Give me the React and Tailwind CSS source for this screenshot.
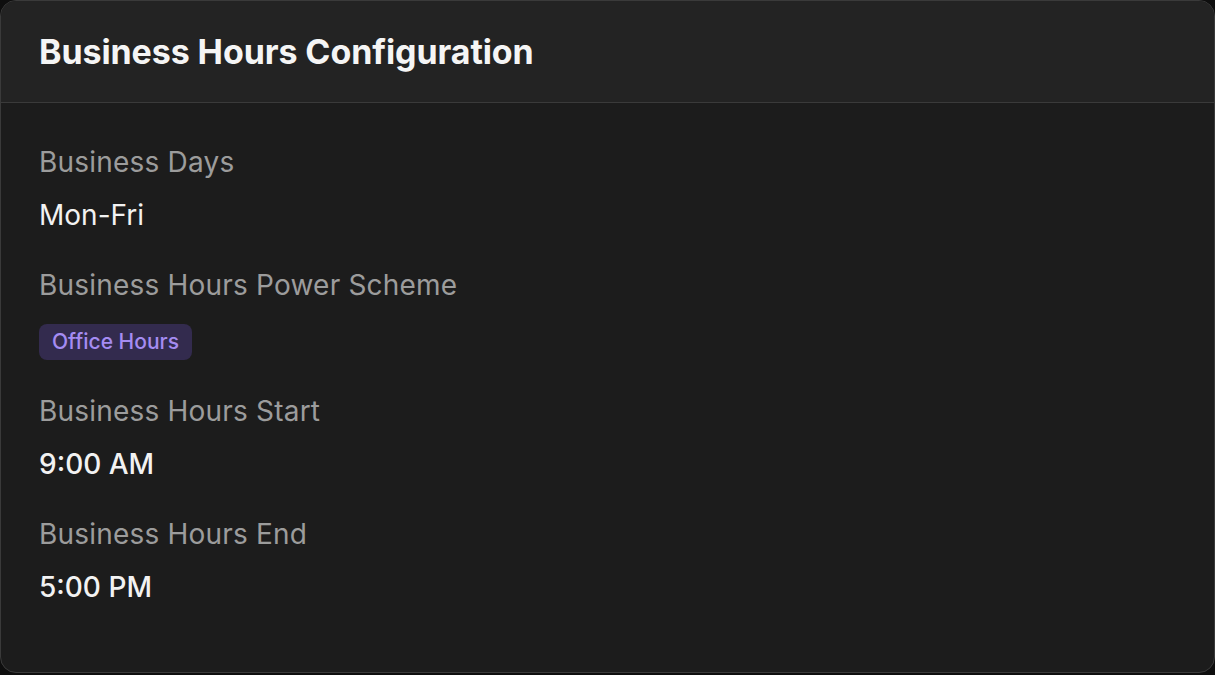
import React from 'react';

const fields = [
  { label: 'Business Days', value: 'Mon-Fri', weight: 'font-normal' },
  { label: 'Business Hours Power Scheme', badge: 'Office Hours' },
  { label: 'Business Hours Start', value: '9:00 AM', weight: 'font-medium' },
  { label: 'Business Hours End', value: '5:00 PM', weight: 'font-medium' },
];

const App = () => {
  return (
    <div className="min-h-screen bg-[#0e0e0e] font-['Inter',sans-serif]">
      <div className="h-[673px] w-full rounded-2xl border border-[#3a3a3a] bg-[#1c1c1c] overflow-hidden flex flex-col">
        <div className="h-[102px] shrink-0 bg-[#232323] border-b border-[#3a3a3a] px-[38px] flex items-center">
          <h2 className="text-[34px] font-bold text-[#f5f5f5] tracking-[-0.1px]">Business Hours Configuration</h2>
        </div>

        <div className="px-[38px] pt-[38px] flex flex-col gap-[28px]">
          {fields.map((f) => (
            <div key={f.label} className={f.badge ? 'flex flex-col gap-[18px] items-start pb-[2px]' : 'flex flex-col gap-[11px]'}>
              <p className="text-[28px] leading-[42px] text-[#9c9c9c] tracking-[0.2px]">{f.label}</p>
              {f.badge ? (
                <span className="h-[36px] px-[13px] rounded-lg bg-[#332b4e] text-[#a58cf2] text-[21px] font-medium flex items-center">
                  {f.badge}
                </span>
              ) : (
                <p className={`text-[28px] leading-[42px] text-[#f2f2f2] ${f.weight}`}>{f.value}</p>
              )}
            </div>
          ))}
        </div>
      </div>
    </div>
  );
};

export default App;
